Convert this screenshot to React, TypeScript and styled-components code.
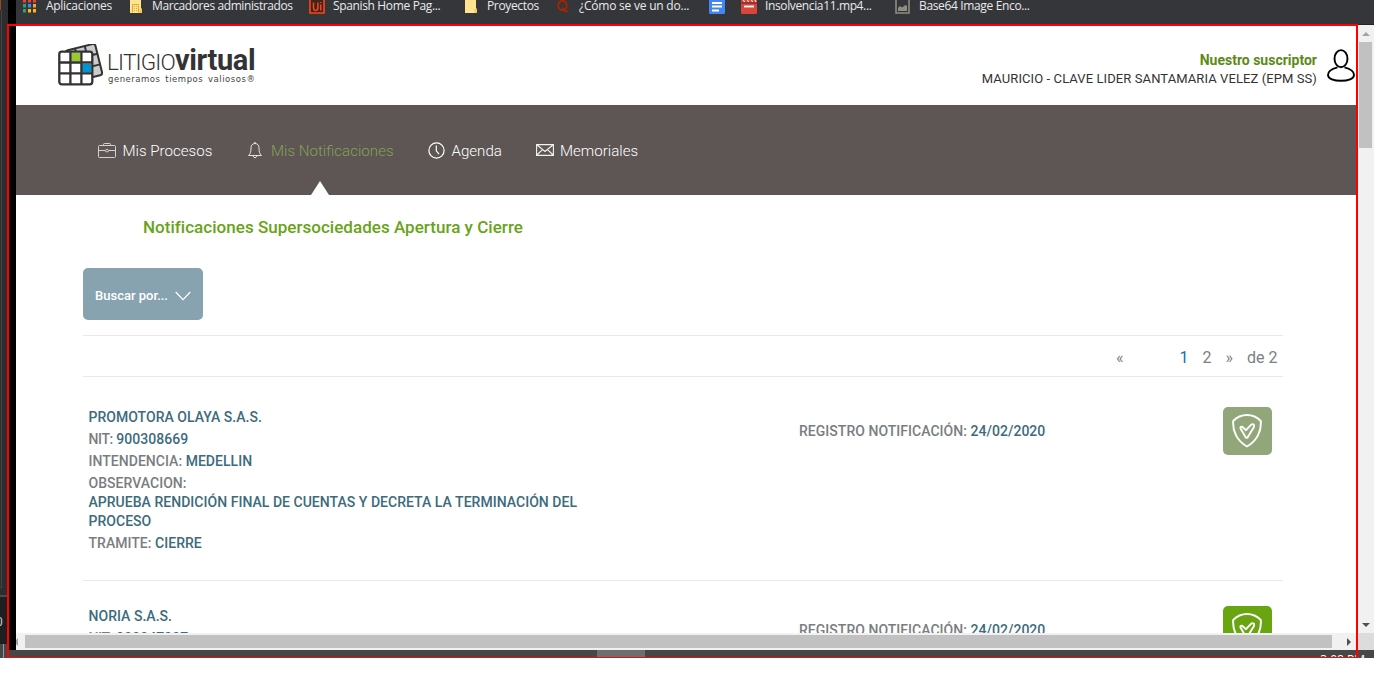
import React from "react";
import styled, { createGlobalStyle } from "styled-components";

const GlobalStyle = createGlobalStyle`
  * { box-sizing: border-box; }
  body { margin: 0; background: #fff; font-family: Roboto, "Liberation Sans", sans-serif; overflow: hidden; }
  svg { display: block; flex: none; }
`;

const Screen = styled.div`
  position: relative;
  display: grid;
  grid-template-columns: 8px 8px 1fr;
  width: 1374px;
  height: 658px;
  overflow: hidden;
`;

const BackWindow = styled.div`
  display: flex;
  flex-direction: column;
  background: #2d2d30;
  overflow: hidden;
`;
const BackPane = styled.div`
  height: 578px;
  width: 2px;
  border-right: 1px solid #434346;
  border-bottom: 1px solid #434346;
`;
const BackTab = styled.div`
  height: 10px;
  background: #99461f;
  width: 1px;
`;
const BackTerminal = styled.div`
  flex: 1;
  margin-top: 7px;
  border-top: 2px solid #4a4a4c;
  background: #1e1f21;
  color: #c4cbd8;
  font-size: 12px;
  line-height: 16px;
  padding-top: 17px;
  text-indent: -4px;
`;
const BackStatus = styled.div`
  width: 4px;
  height: 14px;
  background: #474747;
  border-right: 1px solid #999;
  box-shadow: 4px 0 #474747;
`;
const BlackEdge = styled.div`
  background: #000;
  border-bottom: 8px solid #474747;
`;

const Browser = styled.div`
  display: flex;
  flex-direction: column;
  min-width: 0;
`;
const BookmarksBar = styled.div`
  display: flex;
  height: 25px;
  flex: none;
  background: #35363a;
  border-bottom: 1px solid #232427;
  overflow: hidden;
`;
const Bookmark = styled.div<{ $before: number; $gap: number }>`
  display: flex;
  gap: ${(p) => p.$gap}px;
  margin-left: ${(p) => p.$before}px;
  height: 14px;
`;
const BookmarkLabel = styled.span<{ $w: number; $ls?: number }>`
  width: ${(p) => p.$w}px;
  font: 12px/16px "Open Sans", "Noto Sans", sans-serif;
  letter-spacing: ${(p) => p.$ls ?? 0}px;
  color: #e8eaed;
  white-space: nowrap;
  margin-top: -2px;
`;

const Viewport = styled.div`
  display: grid;
  grid-template-columns: 1fr 17px;
  grid-template-rows: 608px 17px;
`;
const Page = styled.div`
  overflow: hidden;
  background: #fff;
`;
const Header = styled.header`
  display: flex;
  justify-content: space-between;
  height: 80px;
  padding: 18px 2px 0 42px;
`;
const Brand = styled.div`
  display: flex;
  gap: 4px;
`;
const LogoBox = styled.div`
  padding-top: 1px;
`;
const BrandText = styled.div`
  color: #333;
  padding-top: 2px;
`;
const BrandName = styled.div`
  height: 29px;
  font-size: 22.5px;
  line-height: 31px;
  font-weight: 300;
  letter-spacing: -0.8px;
  white-space: nowrap;
  b { font-size: 29px; font-weight: 700; letter-spacing: -0.4px; }
`;
const Tagline = styled.div`
  font: 8.5px/10px "DejaVu Sans", sans-serif;
  color: #444;
  letter-spacing: 0.52px;
  word-spacing: 1.6px;
  white-space: nowrap;
  padding-left: 1px;
`;
const Account = styled.div`
  display: flex;
  gap: 9px;
  text-align: right;
`;
const AccountText = styled.div`
  padding: 8px 1px 0 0;
`;
const AccountRole = styled.div`
  font-size: 14px;
  line-height: 18px;
  font-weight: 700;
  color: #5c8a17;
`;
const AccountName = styled.div`
  font-size: 13px;
  line-height: 20px;
  letter-spacing: 0.09px;
  color: #333;
`;

const Nav = styled.nav`
  display: flex;
  height: 90px;
  padding-left: 82px;
  background: #5d5655;
`;
const NavItem = styled.a<{ $w: number; $gap: number; $active?: boolean }>`
  position: relative;
  display: flex;
  align-items: center;
  gap: ${(p) => p.$gap}px;
  width: ${(p) => p.$w}px;
  padding-top: 1px;
  font-size: 15.1px;
  font-weight: 300;
  color: ${(p) => (p.$active ? "#86a052" : "#fff")};
  white-space: nowrap;
  svg { margin-top: -1px; }
`;
const Pointer = styled.i`
  position: absolute;
  left: 63px;
  bottom: 0;
  border: 9px solid transparent;
  border-top: 0;
  border-bottom: 14px solid #fff;
`;

const Content = styled.main`
  padding: 20px 0 0 67px;
`;
const Title = styled.h1`
  margin: 0 0 0 60px;
  font-size: 17px;
  line-height: 24px;
  font-weight: 500;
  letter-spacing: 0.03px;
  color: #68a319;
`;
const SearchButton = styled.button`
  display: flex;
  align-items: center;
  gap: 7px;
  width: 120px;
  height: 52px;
  margin: 29px 0 15px;
  padding: 3px 0 0 12px;
  border: 0;
  border-radius: 5px;
  background: #87a3af;
  color: #fff;
  font: 500 13px Roboto, sans-serif;
`;
const Pager = styled.div`
  display: flex;
  justify-content: flex-end;
  width: 1200px;
  height: 42px;
  padding-right: 5.5px;
  border: solid #eaeaea;
  border-width: 1px 0;
  font-size: 16px;
  line-height: 43px;
  color: #7b7f83;
`;
const PageLink = styled.a<{ $before?: number; $active?: boolean }>`
  margin-left: ${(p) => p.$before ?? 0}px;
  color: ${(p) => (p.$active ? "#0c73ae" : "inherit")};
`;
const Item = styled.article<{ $first?: boolean }>`
  display: flex;
  width: 1200px;
  height: ${(p) => (p.$first ? 204 : 199)}px;
  padding: ${(p) => (p.$first ? 30 : 25)}px 0 0 5.5px;
  border-bottom: 1px solid #eaeaea;
  font-size: 14px;
  line-height: 19px;
  font-weight: 500;
  letter-spacing: 0.03px;
`;
const Details = styled.div`
  width: 710.5px;
  padding-top: 1px;
  color: #3c6b7c;
`;
const Field = styled.p`
  width: 510px;
  margin: 0 0 3px;
`;
const Label = styled.span<{ $tight?: boolean }>`
  color: #7a7d80;
  letter-spacing: ${(p) => (p.$tight ? "-0.4px" : "inherit")};
`;
const Registered = styled.div`
  width: 424px;
  padding-top: 15px;
  color: #3c6b7c;
`;
const Status = styled.button<{ $color: string }>`
  display: grid;
  place-items: center;
  width: 49px;
  height: 48px;
  padding: 0 1px 0 0;
  border: 0;
  border-radius: 5px;
  background: ${(p) => p.$color};
`;

const VScroll = styled.div`
  display: flex;
  flex-direction: column;
  align-items: center;
  justify-content: space-between;
  padding: 7px 0 6px;
  background: #f1f1f1;
`;
const VThumb = styled.div`
  width: 13px;
  height: 106px;
  margin: 6px 0 auto;
  background: #c1c1c1;
`;
const HScroll = styled.div`
  display: flex;
  align-items: center;
  padding-right: 6px;
  background: #f1f1f1;
`;
const HThumb = styled.div`
  width: 1307px;
  height: 13px;
  margin: 0 auto 0 7px;
  background: #c1c1c1;
`;
const Corner = styled.div`
  background: #dcdcdc;
`;
const Taskbar = styled.div`
  display: flex;
  justify-content: space-between;
  height: 8px;
  padding: 0 9px 0 581px;
  background: #474747;
  overflow: hidden;
`;
const ActiveTask = styled.div`
  width: 48px;
  height: 7px;
  background: #6e6e6e;
`;
const Clock = styled.span`
  font: 12px/16px "Open Sans", sans-serif;
  color: #fff;
  padding-top: 2px;
`;
const RedFrame = styled.div`
  position: absolute;
  left: 7px;
  top: 24px;
  width: 1351px;
  height: 634px;
  border: 2px solid #f00;
  border-bottom: 1px solid #e01010;
  pointer-events: none;
`;

const AppsIcon = () => (
  <svg width="13" height="14">
    {["#ea4335", "#ea4335", "#ea4335", "#34a06a", "#2f8dff", "#f3a72e", "#34a06a", "#fbbc05", "#fbbc05"].map((c, i) => (
      <rect key={i} x={(i % 3) * 5} y={Math.floor(i / 3) * 5 - 1} width="3" height="3.5" fill={c} />
    ))}
  </svg>
);
const FolderIcon = ({ building }: { building?: boolean }) => (
  <svg width="12" height="14">
    <path d="M0 0h11v8.500h1V13H0z" fill="#ffe391" />
    <path d="M9.500 9H12v4H9.500z" fill="#f2cb58" />
    {building && <path d="M2.500 12.500V4.500h6v8M4 6.500h1M6 6.500h1M4 8.500h1M6 8.500h1M4 10.500h1M6 10.500h1" stroke="#d9ae35" fill="none" />}
  </svg>
);
const UiIcon = () => (
  <svg width="16" height="14">
    <path d="M1 0v13h14V0" stroke="#fa4616" strokeWidth="1.6" fill="#40251f" />
    <path d="M4.500 2.500v5q0 3 2.200 3t2.200-3v-5M11.700 4.500v6M11.700 2v1" stroke="#fa4616" strokeWidth="1.500" fill="none" />
  </svg>
);
const QIcon = () => (
  <svg width="12" height="14">
    <ellipse cx="5.500" cy="5.500" rx="4.200" ry="4.800" stroke="#a82400" strokeWidth="1.900" fill="none" />
    <path d="M4.500 8q2.500 0 3.500 3 1.500 1.500 3-.5" stroke="#a82400" strokeWidth="1.500" fill="none" />
  </svg>
);
const DocIcon = () => (
  <svg width="16" height="14">
    <path d="M0 0h16v12.500q0 1.500-1.500 1.500h-13Q0 14 0 12.500z" fill="#4285f4" />
    <path d="M3 3h10M3 6.500h10M3 10.500h7" stroke="#fff" strokeWidth="1.800" />
  </svg>
);
const ClipIcon = () => (
  <svg width="16" height="14">
    <path d="M0 3.500h16v9q0 1.500-1.500 1.500h-13Q0 14 0 12.500zM0 0h16v2.500H0z" fill="#db4437" />
    <path d="M2.500 0l1 2M6.500 0l1 2M10.500 0l1 2M14 0l1 2" stroke="#fff" strokeWidth="1" />
    <path d="M3 6.500h10" stroke="#fff" strokeWidth="1.800" />
  </svg>
);
const PictureIcon = () => (
  <svg width="15" height="14">
    <path d="M1 0v13h13V0" stroke="#8e8e80" strokeWidth="1.600" fill="none" />
    <path d="M3 11V8l2-2 2 1.500L10.500 5l1.500 1v5z" fill="#8e8e80" />
  </svg>
);

const LogoMark = () => (
  <svg width="45" height="42" viewBox="0 0 45 42">
    <g transform="rotate(-14 25 20)" stroke="#333" strokeWidth="2" fill="#ccc">
      <rect x="11" y="3" width="30.500" height="32" rx="2.500" />
      <path d="M21 3v32M31 3v32M11 13.500h30.500M11 24.500h30.500" fill="none" />
    </g>
    <rect x="1.300" y="7.700" width="33" height="32.600" rx="2.500" fill="#fff" stroke="#333" strokeWidth="2.300" />
    <path d="M13 9h9.500v8.500H13z" fill="#97c930" />
    <path d="M24 20h9v8.500h-9z" fill="#0095ce" />
    <path d="M12.400 7.700v32.600M23.400 7.700v32.600M1.300 18.500h33M1.300 29.300h33" stroke="#333" strokeWidth="2.300" />
  </svg>
);
const PersonIcon = () => (
  <svg width="28" height="40" viewBox="0 0 28 40" fill="none" stroke="#000" strokeWidth="1.900">
    <path d="M10.500 24.300C5.500 25.500 1 28.200 1 32c0 3.800 6 5.800 13 5.800s13-2 13-5.800c0-3.800-4.500-6.500-9.500-7.700" />
    <ellipse cx="14" cy="15.700" rx="6.500" ry="8.600" />
  </svg>
);
const BriefcaseIcon = () => (
  <svg width="18" height="17" fill="none" stroke="#d5d2d1">
    <rect x=".5" y="3.500" width="17" height="12" rx="1" />
    <path d="M5.500 3.500v-1q0-1 1-1h5q1 0 1 1v1M.5 8.500h6.500M11 8.500h6.500" />
    <ellipse cx="9" cy="8.700" rx="1.700" ry="1.200" />
  </svg>
);
const BellIcon = () => (
  <svg width="14" height="17" fill="none" stroke="#e6e4e3">
    <path d="M7 1.500C4.200 1.500 3 3.500 3 6c0 4-.7 6-2.500 7.500h13C11.700 12 11 10 11 6c0-2.500-1.200-4.500-4-4.500zM6 1.200q1-1.400 2 0M5 14q2 3.500 4 0" />
  </svg>
);
const ClockIcon = () => (
  <svg width="17" height="17" fill="none" stroke="#fff" strokeWidth="1.200">
    <circle cx="8.500" cy="8.500" r="7.600" />
    <path d="M8.300 3.500v5.300l2.700 3.300" />
  </svg>
);
const MailIcon = () => (
  <svg width="18" height="12" fill="none" stroke="#f4f3f3" strokeWidth="1.100">
    <path d="M.6.600h16.800v10.800H.6zM.8.800L9 7.500 17.200.8M.8 11l5.700-5.300M17.200 11l-5.700-5.300" />
  </svg>
);
const ChevronIcon = () => (
  <svg width="17" height="10" fill="none" stroke="#fff" strokeWidth="1.200">
    <path d="M.7 1l7.300 7.600L15.300 1" />
  </svg>
);
const ShieldIcon = () => (
  <svg width="30" height="34" viewBox="0 0 30 34" fill="none" stroke="#fff" strokeWidth="1.900" strokeLinejoin="round">
    <path d="M15 1C11 1 5 3 1.200 7c-.8 10 3.800 20 13.800 25.500C25 27 29.600 17 28.800 7 25 3 19 1 15 1z" />
    <path d="M8.600 14.800q-.8-2.300 1.600-2l3.800 3.400 5-5.400q1.300-1 2.800-.3.600.7.200 2.500l-6.500 10.500q-1 .8-1.800-.2z" />
  </svg>
);
const Arrow = ({ d, color, w, h }: { d: string; color: string; w: number; h: number }) => (
  <svg width={w} height={h}>
    <path d={d} fill={color} />
  </svg>
);

export default function App() {
  return (
    <>
      <GlobalStyle />
      <Screen>
        <BackWindow>
          <BackTab />
          <BackPane />
          <BackTerminal>0</BackTerminal>
          <BackStatus />
        </BackWindow>
        <BlackEdge />
        <Browser>
          <BookmarksBar>
            <Bookmark $before={7} $gap={10}><AppsIcon /><BookmarkLabel $w={66} $ls={-0.28}>Aplicaciones</BookmarkLabel></Bookmark>
            <Bookmark $before={18} $gap={10}><FolderIcon building /><BookmarkLabel $w={141} $ls={-0.4}>Marcadores administrados</BookmarkLabel></Bookmark>
            <Bookmark $before={16} $gap={8}><UiIcon /><BookmarkLabel $w={108} $ls={-0.35}>Spanish Home Pag...</BookmarkLabel></Bookmark>
            <Bookmark $before={24} $gap={10}><FolderIcon /><BookmarkLabel $w={52} $ls={-0.35}>Proyectos</BookmarkLabel></Bookmark>
            <Bookmark $before={18} $gap={10}><QIcon /><BookmarkLabel $w={110} $ls={-0.22}>¿Cómo se ve un do...</BookmarkLabel></Bookmark>
            <Bookmark $before={20} $gap={0}><DocIcon /></Bookmark>
            <Bookmark $before={16} $gap={8}><ClipIcon /><BookmarkLabel $w={107} $ls={-0.37}>Insolvencia11.mp4...</BookmarkLabel></Bookmark>
            <Bookmark $before={23} $gap={9}><PictureIcon /><BookmarkLabel $w={111} $ls={-0.35}>Base64 Image Enco...</BookmarkLabel></Bookmark>
          </BookmarksBar>
          <Viewport>
            <Page>
              <Header>
                <Brand>
                  <LogoBox><LogoMark /></LogoBox>
                  <BrandText>
                    <BrandName>LITIGIO<b>virtual</b></BrandName>
                    <Tagline>generamos tiempos valiosos®</Tagline>
                  </BrandText>
                </Brand>
                <Account>
                  <AccountText>
                    <AccountRole>Nuestro suscriptor</AccountRole>
                    <AccountName>MAURICIO - CLAVE LIDER SANTAMARIA VELEZ (EPM SS)</AccountName>
                  </AccountText>
                  <PersonIcon />
                </Account>
              </Header>
              <Nav>
                <NavItem $w={150} $gap={6.5}><BriefcaseIcon />Mis Procesos</NavItem>
                <NavItem $w={179.5} $gap={9} $active><BellIcon />Mis Notificaciones<Pointer /></NavItem>
                <NavItem $w={108.5} $gap={7}><ClockIcon />Agenda</NavItem>
                <NavItem $w={110} $gap={6}><MailIcon />Memoriales</NavItem>
              </Nav>
              <Content>
                <Title>Notificaciones Supersociedades Apertura y Cierre</Title>
                <SearchButton>Buscar por...<ChevronIcon /></SearchButton>
                <Pager>
                  <PageLink>«</PageLink>
                  <PageLink $before={56} $active>1</PageLink>
                  <PageLink $before={14}>2</PageLink>
                  <PageLink $before={14}>»</PageLink>
                  <PageLink $before={14}>de 2</PageLink>
                </Pager>
                <Item $first>
                  <Details>
                    <Field>PROMOTORA OLAYA S.A.S.</Field>
                    <Field><Label $tight>NIT:</Label> 900308669</Field>
                    <Field><Label>INTENDENCIA:</Label> MEDELLIN</Field>
                    <Field><Label>OBSERVACION:</Label><br />APRUEBA RENDICIÓN FINAL DE CUENTAS Y DECRETA LA TERMINACIÓN DEL PROCESO</Field>
                    <Field><Label>TRAMITE:</Label> CIERRE</Field>
                  </Details>
                  <Registered><Label>REGISTRO NOTIFICACIÓN:</Label> 24/02/2020</Registered>
                  <Status $color="#92a779"><ShieldIcon /></Status>
                </Item>
                <Item>
                  <Details>
                    <Field>NORIA S.A.S.</Field>
                    <Field><Label $tight>NIT:</Label> 900047907</Field>
                  </Details>
                  <Registered><Label>REGISTRO NOTIFICACIÓN:</Label> 24/02/2020</Registered>
                  <Status $color="#68a510"><ShieldIcon /></Status>
                </Item>
              </Content>
            </Page>
            <VScroll>
              <Arrow w={8} h={4} color="#a3a3a3" d="M0 4L4 0l4 4z" />
              <VThumb />
              <Arrow w={8} h={4} color="#505050" d="M0 0h8L4 4z" />
            </VScroll>
            <HScroll>
              <Arrow w={2} h={8} color="#a3a3a3" d="M0 2l2-2v8L0 6z" />
              <HThumb />
              <Arrow w={4} h={8} color="#505050" d="M0 0l4 4-4 4z" />
            </HScroll>
            <Corner />
          </Viewport>
          <Taskbar>
            <ActiveTask />
            <Clock>3:08 PM</Clock>
          </Taskbar>
        </Browser>
        <RedFrame />
      </Screen>
    </>
  );
}
